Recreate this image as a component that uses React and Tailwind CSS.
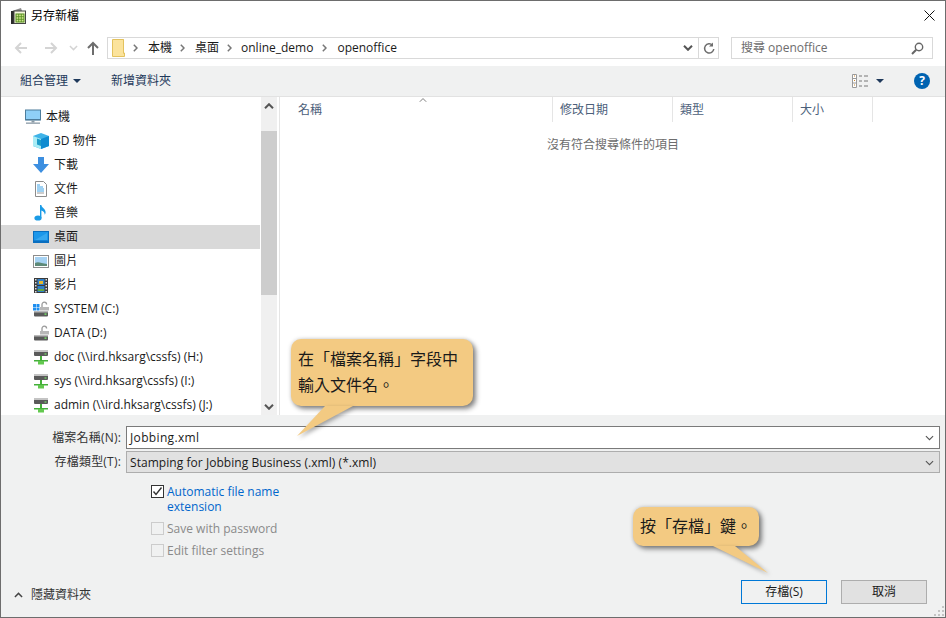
import React from "react";

const FONT = '"Open Sans","Noto Sans CJK TC",sans-serif';

const TitleIcon = () => (
  <svg width="15" height="16" viewBox="0 0 15 16" className="shrink-0">
    <path d="M1 3 L10 0 L11 3 Z" fill="#8a8a8a" />
    <rect x="0" y="3" width="3" height="13" fill="#2b2b2b" />
    <rect x="3" y="3" width="11.500" height="12.500" fill="#f6f7dc" stroke="#444" strokeWidth="1" />
    <rect x="5" y="6" width="8" height="8" fill="#cfe58c" stroke="#4f8a1a" strokeWidth="1" />
    <path d="M5 8.700h8M5 11.300h8M7.700 6v8M10.300 6v8" stroke="#4f8a1a" strokeWidth="0.800" />
  </svg>
);
const Arrow = ({ dir = "left", color = "#d4d4d4" }) => (
  <svg width="14" height="14" viewBox="0 0 14 14" className="shrink-0">
    {dir === "left" && <path d="M13 7H2M7 2 2 7l5 5" fill="none" stroke={color} strokeWidth="2" />}
    {dir === "right" && <path d="M1 7h11M7 2l5 5-5 5" fill="none" stroke={color} strokeWidth="2" />}
    {dir === "up" && <path d="M7 14V2M2 7l5-5 5 5" fill="none" stroke={color} strokeWidth="2" />}
  </svg>
);
const Chev = ({ up, w = 10, color = "#6d6d6d", sw = 1.6 }) => (
  <svg width={w} height="6" viewBox="0 0 10 6" className="shrink-0">
    <path d={up ? "M1 5.200 5 1.200l4 4" : "M1 .8l4 4 4-4"} fill="none" stroke={color} strokeWidth={sw} />
  </svg>
);
const Sep = () => (
  <svg width="5" height="8" viewBox="0 0 5 8" className="shrink-0">
    <path d="M.8 .8 4 4 .8 7.200" fill="none" stroke="#777" strokeWidth="1.500" />
  </svg>
);
const Caret = ({ color = "#1e395b" }) => (
  <svg width="8" height="4" viewBox="0 0 8 4" className="shrink-0">
    <path d="M0 0h8L4 4z" fill={color} />
  </svg>
);
const Folder = () => (
  <svg width="13" height="18" viewBox="0 0 13 18" className="shrink-0">
    <path d="M.5 .5h11v13.500h1v3.500H.5z" fill="#fbe39c" stroke="#e3c25e" />
    <path d="M11.500 .5v14" stroke="#e3c25e" />
  </svg>
);

const Pc = () => (
  <svg width="16" height="16" viewBox="0 0 16 16">
    <rect x=".5" y="1" width="15" height="10" fill="#8fd0f7" stroke="#4d7d9c" />
    <rect x="1" y="10" width="14" height="1.200" fill="#4d7d9c" />
    <rect x="6.500" y="11.500" width="3" height="2" fill="#8a9aa6" />
    <rect x="1" y="13.500" width="14" height="1.300" fill="#8a9aa6" />
  </svg>
);
const Cube = () => (
  <svg width="16" height="16" viewBox="0 0 16 16">
    <path d="M8 0 16 3v10l-8 3-8-3V3z" fill="#3fb3e8" />
    <path d="M0 3l8 3v10l-8-3z" fill="#a9ecf5" />
    <path d="M8 6l8-3v10l-8 3z" fill="#0f8bd0" />
    <path d="M4 5.500 8 7v6l-4-1.500z" fill="#1d9cc9" />
  </svg>
);
const Down = () => (
  <svg width="16" height="16" viewBox="0 0 16 16">
    <path d="M5 0h6v7h5l-8 9-8-9h5z" fill="#3d8fe0" />
  </svg>
);
const Doc = () => (
  <svg width="16" height="16" viewBox="0 0 16 16">
    <path d="M2.500 .5h8l3 3v12h-11z" fill="#fff" stroke="#8c8c8c" />
    <path d="M4 4h3M4 6h6M4 8h7M4 10h7" stroke="#3fa3e6" />
    <path d="M4 12h7" stroke="#9a9a9a" />
  </svg>
);
const Note = () => (
  <svg width="16" height="16" viewBox="0 0 16 16">
    <ellipse cx="5" cy="13" rx="3.600" ry="2.600" fill="#1a9be6" />
    <path d="M7 13V0h1.400c0 3 4.200 3.500 4.200 7.200 0 1.200-.4 2-.9 2.600.2-3-2.200-3.800-3.300-4.300V13z" fill="#1a9be6" />
  </svg>
);
const Desk = () => (
  <svg width="16" height="12" viewBox="0 0 16 12">
    <rect x=".5" y=".5" width="15" height="11" fill="#1c97ea" stroke="#0a6fc0" />
    <rect x="1" y="9.500" width="14" height="1.500" fill="#0a6fc0" />
    <path d="M2 9 14 2v7z" fill="#37a8f0" />
  </svg>
);
const Pic = () => (
  <svg width="16" height="13" viewBox="0 0 16 13">
    <rect x=".5" y=".5" width="15" height="12" fill="#fff" stroke="#8c8c8c" />
    <rect x="2" y="2" width="12" height="9" fill="#a6d2f3" />
    <path d="M2 8c3-2 6 0 12 1v2H2z" fill="#5e8a78" />
  </svg>
);
const Film = () => (
  <svg width="14" height="15" viewBox="0 0 14 15">
    <rect width="14" height="15" fill="#3a3a3a" />
    <path d="M1 1h1.500v1.500H1zM1 4h1.500v1.500H1zM1 7h1.500v1.500H1zM1 10h1.500v1.500H1zM1 13h1.500v1.500H1zM11.500 1H13v1.500h-1.500zM11.500 4H13v1.500h-1.500zM11.500 7H13v1.500h-1.500zM11.500 10H13v1.500h-1.500zM11.500 13H13v1.500h-1.500z" fill="#ddd" />
    <rect x="3.500" y="1" width="7" height="6" fill="#2f7fc9" />
    <rect x="3.500" y="8" width="7" height="6" fill="#2f7fc9" />
    <path d="M5 3h4v3H5z" fill="#e4b92e" />
    <path d="M4 11h6v2H4z" fill="#63a83c" />
  </svg>
);
const Drive = ({ win }) => (
  <svg width="16" height="16" viewBox="0 0 16 16">
    {win && <path d="M0 3h3v3H0zM3.500 3h3v3h-3zM0 6.500h3v3H0zM3.500 6.500h3v3h-3z" fill="#1f8ff0" />}
    <path d="M9 6V3.500a2.300 2.300 0 0 1 4.600 0" fill="none" stroke="#9a9a9a" strokeWidth="1.300" />
    <rect x="7" y="6" width="9" height="3.500" fill="#b7b7b7" />
    <rect x="1" y="10" width="14" height="5.500" rx="1" fill="#5a5a5a" />
    <rect x="1" y="10" width="14" height="1.500" fill="#b9b9b9" />
    <rect x="11.500" y="12.500" width="2" height="1.200" fill="#7cff6b" />
  </svg>
);
const Net = () => (
  <svg width="16" height="16" viewBox="0 0 16 16">
    <rect x="1" y="1" width="14" height="6" rx="1" fill="#5a5a5a" />
    <rect x="1" y="1" width="14" height="2" fill="#c4c4c4" />
    <rect x="11.500" y="4.500" width="2" height="1" fill="#7cff6b" />
    <rect x="7" y="7" width="2" height="4" fill="#45b03a" />
    <path d="M1 11h14v1.500H1z" fill="#45b03a" />
    <rect x="5" y="12" width="6" height="3.500" fill="#63c94f" />
  </svg>
);

const rows = [
  { t: "本機", I: Pc, x: 24 },
  { t: "3D 物件", I: Cube },
  { t: "下載", I: Down },
  { t: "文件", I: Doc },
  { t: "音樂", I: Note },
  { t: "桌面", I: Desk, sel: true },
  { t: "圖片", I: Pic },
  { t: "影片", I: Film },
  { t: "SYSTEM (C:)", I: () => <Drive win /> },
  { t: "DATA (D:)", I: Drive },
  { t: "doc (\\\\ird.hksarg\\cssfs) (H:)", I: Net },
  { t: "sys (\\\\ird.hksarg\\cssfs) (I:)", I: Net },
  { t: "admin (\\\\ird.hksarg\\cssfs) (J:)", I: Net },
];

const Check = ({ on, label, second }) => (
  <div className="flex items-start gap-[3px]">
    <span className={`mt-[1px] flex h-[13px] w-[13px] shrink-0 items-center justify-center border ${on ? "border-[#333333] bg-white" : "border-[#cccccc] bg-[#f0f1f1]"}`}>
      {on && (
        <svg width="11" height="11" viewBox="0 0 11 11">
          <path d="M1.500 5.500 4 8.500 9.500 1.500" fill="none" stroke="#333" strokeWidth="1.400" />
        </svg>
      )}
    </span>
    <span className={`text-[12px] leading-[15px] ${on ? "text-[#0066cc]" : "text-[#8a8a8a]"}`}>
      {label}
      {second && <br />}
      {second}
    </span>
  </div>
);

const Header = ({ w, t, children }) => (
  <div className="relative flex h-[25px] shrink-0 items-center border-r border-[#e5e5e5] pl-[7px] text-[12px] text-[#4c607a]" style={{ width: w }}>
    {t}
    {children}
  </div>
);

const Callout = ({ className, tail, tailClass, children }) => (
  <div className={`absolute rounded-[10px] bg-[#f3ca82] text-[16px] leading-[26px] text-[#1a1a1a] shadow-[3px_3px_5px_rgba(0,0,0,0.45),0_0_4px_rgba(0,0,0,0.18)] [text-spacing-trim:space-all] ${className}`}>
    {children}
    <svg className={`absolute overflow-visible ${tailClass}`} width="60" height="40">
      <path d={tail} fill="#f3ca82" style={{ filter: "drop-shadow(2px 2px 2px rgba(0,0,0,.35))" }} />
    </svg>
  </div>
);

export default function App() {
  return (
    <div className="relative flex h-[618px] w-[946px] flex-col overflow-hidden border border-[#6d6d6d] bg-white text-[12px] text-black" style={{ fontFamily: FONT }}>
      {/* title */}
      <div className="flex h-[29px] shrink-0 items-center pl-[10px] pr-[8px]">
        <TitleIcon />
        <span className="ml-[5px] text-[12px]">另存新檔</span>
        <svg width="11" height="11" viewBox="0 0 11 11" className="ml-auto mr-[2px]">
          <path d="M.5 .5l10 10M10.500 .5l-10 10" stroke="#111" strokeWidth="1" />
        </svg>
      </div>
      {/* address */}
      <div className="flex h-[36px] shrink-0 items-center pl-[13px] pr-[12px]">
        <Arrow dir="left" />
        <span className="w-[16px]" />
        <Arrow dir="right" />
        <span className="ml-[11px]"><Chev color="#d4d4d4" w={9} /></span>
        <span className="ml-[8px]"><Arrow dir="up" color="#6d6d6d" /></span>
        <div className="ml-[7px] flex h-[22px] w-[612px] items-center border border-[#d9d9d9] pl-[4px] text-[#1a1a1a]">
          <Folder />
          <span className="ml-[8px]"><Sep /></span>
          <span className="ml-[10px]">本機</span>
          <span className="ml-[8px]"><Sep /></span>
          <span className="ml-[10px]">桌面</span>
          <span className="ml-[8px]"><Sep /></span>
          <span className="ml-[9px]">online_demo</span>
          <span className="ml-[9px]"><Sep /></span>
          <span className="ml-[10px]">openoffice</span>
          <span className="ml-auto mr-[5px]"><Chev color="#555" sw={2} /></span>
          <span className="flex h-full w-[20px] items-center justify-center border-l border-[#d9d9d9]">
            <svg width="12" height="13" viewBox="0 0 12 13">
              <path d="M9.500 3.200A4.600 4.600 0 1 0 10.800 7" fill="none" stroke="#6d6d6d" strokeWidth="1.500" />
              <path d="M10 .5v4H6z" fill="#6d6d6d" />
            </svg>
          </span>
        </div>
        <div className="ml-[12px] flex h-[22px] w-[202px] items-center border border-[#d9d9d9] pl-[9px] pr-[8px] text-[#6d6d6d]">
          <span>搜尋 openoffice</span>
          <svg width="13" height="13" viewBox="0 0 13 13" className="ml-auto">
            <circle cx="8" cy="5" r="3.700" fill="none" stroke="#666" strokeWidth="1.400" />
            <path d="M5.200 7.800 1 12" stroke="#666" strokeWidth="2" />
          </svg>
        </div>
      </div>
      {/* toolbar */}
      <div className="flex h-[31px] shrink-0 items-center border-b border-[#e2e2e2] bg-[#f0f1f1] pl-[19px] pr-[15px] text-[#1e395b]">
        <span>組合管理</span>
        <span className="ml-[5px]"><Caret /></span>
        <span className="ml-[30px]">新增資料夾</span>
        <svg width="16" height="14" viewBox="0 0 16 14" className="ml-auto">
          <path d="M.5 .5h4v13h-4zM.5 4.500h4M.5 9h4" fill="#fff" stroke="#9a9a9a" />
          <path d="M2 2h1M2 6.500h1M2 11h1" stroke="#d08a2c" />
          <path d="M7 2h3M12 2h4M7 7h3M12 7h4M7 12h3M12 12h4" stroke="#777" />
        </svg>
        <span className="ml-[8px]"><Caret /></span>
        <span className="ml-[30px] flex h-[16px] w-[16px] items-center justify-center rounded-full bg-[#0063b1] text-[12px] font-bold text-white">?</span>
      </div>
      {/* main */}
      <div className="flex h-[318px] shrink-0">
        <div className="w-[259px] shrink-0 overflow-hidden pt-[8px] text-[#1a1a1a]">
          {rows.map((r) => (
            <div key={r.t} className={`flex h-[24px] items-center whitespace-nowrap ${r.sel ? "bg-[#d9d9d9]" : ""} ${r.x ? "pl-[24px]" : "pl-[32px]"}`}>
              <span className="flex w-[16px] shrink-0 items-center justify-center"><r.I /></span>
              <span className="ml-[5px]">{r.t}</span>
            </div>
          ))}
        </div>
        <div className="ml-[1px] flex w-[16px] shrink-0 flex-col bg-[#f0f0f0]">
          <div className="flex h-[34px] shrink-0 items-center justify-center pb-[16px]"><Chev up color="#555" sw={2} /></div>
          <div className="h-[164px] shrink-0 bg-[#cdcdcd]" />
          <div className="flex flex-1 items-end justify-center pb-[5px]"><Chev color="#555" sw={2} /></div>
        </div>
        <div className="ml-[2px] min-w-0 flex-1 border-l border-[#e5e5e5]">
          <div className="flex">
            <Header w={273} t={<span className="ml-[11px]">名稱</span>}>
              <span className="absolute left-[139px] top-[0px]"><Chev up color="#777" w={8} sw={1.2} /></span>
            </Header>
            <Header w={120} t="修改日期" />
            <Header w={120} t="類型" />
            <Header w={80} t="大小" />
          </div>
          <div className="mt-[14px] pl-[267px] text-[12px] text-[#6d6d6d]">沒有符合搜尋條件的項目</div>
        </div>
      </div>
      {/* bottom */}
      <div className="relative flex min-h-0 flex-1 flex-col bg-[#f0f1f1]">
        <div className="mt-[11px] flex h-[23px] items-center">
          <span className="w-[120px] text-right tracking-[0.2px] text-[#333333]">檔案名稱(N):</span>
          <div className="ml-[5px] flex h-[23px] w-[814px] items-center border border-[#7a7a7a] bg-white pl-[3px] pr-[5px] tracking-[0.35px] text-[#1a1a1a]">
            Jobbing.xml
            <span className="ml-auto"><Chev w={9} color="#555" sw={1.2} /></span>
          </div>
        </div>
        <div className="mt-[2px] flex h-[22px] items-center">
          <span className="w-[120px] text-right tracking-[0.2px] text-[#333333]">存檔類型(T):</span>
          <div className="ml-[5px] flex h-[22px] w-[814px] items-center border border-[#adadad] bg-[#e1e1e1] pl-[3px] pr-[5px] pt-[1px] tracking-[0.05px] text-[#1a1a1a]">
            Stamping for Jobbing Business (.xml) (*.xml)
            <span className="ml-auto"><Chev w={9} color="#555" sw={1.2} /></span>
          </div>
        </div>
        <div className="ml-[150px] mt-[11px] flex flex-col gap-[7px]">
          <Check on label="Automatic file name" second="extension" />
          <Check label="Save with password" />
          <Check label="Edit filter settings" />
        </div>
        <div className="mt-auto flex items-start pb-[13px] pl-[13px] pr-[18px]">
          <span className="mt-[12px]"><Chev up w={9} color="#444" sw={1.6} /></span>
          <span className="ml-[8px] mt-[6px] text-[#333333]">隱藏資料夾</span>
          <button className="ml-auto h-[24px] w-[86px] border-[1.500px] border-[#0078d7] bg-[#f0f1f1] text-[12px] text-[#1a1a1a]">存檔(S)</button>
          <button className="ml-[14px] h-[24px] w-[86px] border border-[#adadad] bg-[#e1e1e1] text-[12px] text-[#1a1a1a]">取消</button>
        </div>
        <svg width="12" height="12" viewBox="0 0 12 12" className="absolute bottom-0 right-0">
          <path d="M9 1h2v2H9zM5 5h2v2H5zM9 5h2v2H9zM1 9h2v2H1zM5 9h2v2H5zM9 9h2v2H9z" fill="#c4c4c4" />
        </svg>
      </div>
      {/* callouts */}
      <Callout className="left-[290px] top-[338px] h-[67px] w-[182px] px-[7px] py-[7px]" tail="M34 0 L62 0 L6 30 Z" tailClass="left-0 top-[67px]">
        在「檔案名稱」字段中<br />輸入文件名。
      </Callout>
      <Callout className="left-[632px] top-[506px] h-[39px] w-[126px] whitespace-nowrap px-[7px] py-[6px]" tail="M80 0 L102 0 L135 27 Z" tailClass="left-0 top-[39px]">
        按「存檔」鍵。
      </Callout>
    </div>
  );
}
